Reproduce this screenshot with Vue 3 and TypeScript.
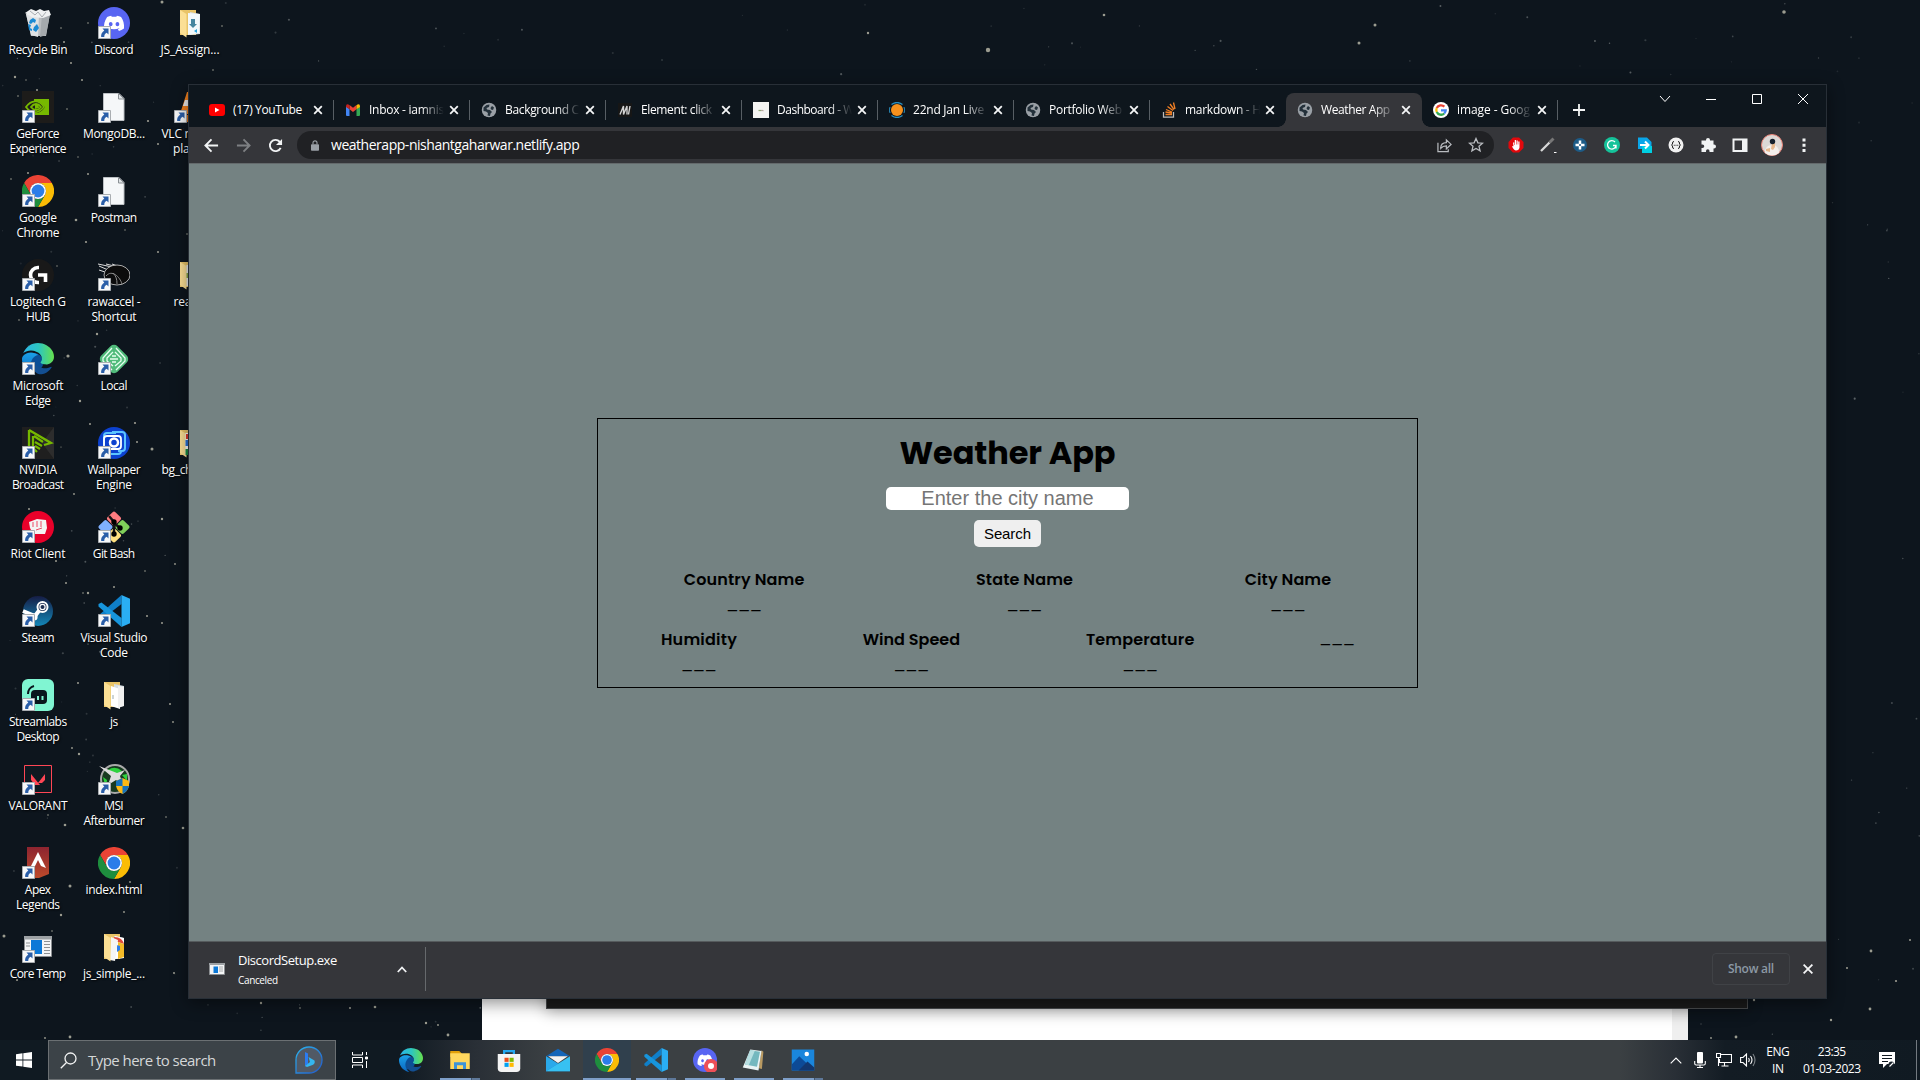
<script setup lang="ts">
import type { Directive } from 'vue'

interface DesktopItem {
  icon: string
  lines: [string, number][]
  col: number
  row: number
  shortcut?: boolean
}
interface Tab {
  title: string
  width: number
  icon: string
  active?: boolean
}
interface Field {
  label?: string
  width: number
}
interface Pin {
  icon: string
  state?: 'open' | 'stacked' | 'active'
}

// Spreads or tightens letters so that a label takes the given width.
const vFit: Directive<HTMLElement, number> = {
  mounted(el, { value }) {
    const count = el.textContent?.length ?? 0
    if (!count) return
    const natural = el.getBoundingClientRect().width
    const gap = (value - natural) / (count - 0.5)
    el.style.letterSpacing = `${gap.toFixed(3)}px`
    el.style.marginRight = `${(-gap).toFixed(3)}px`
  },
}

const discordFace =
  'M20.3 4.4a19.8 19.8 0 0 0-4.9-1.5l-.7 1.3c-1.8-.3-3.7-.3-5.5 0l-.6-1.3a19.7 19.7 0 0 0-4.9 1.5C.5 9-.3 13.6.1 18.1c2.1 1.5 4 2.4 6 3l1.3-2.1-2-.9.5-.4c3.9 1.8 8.2 1.8 12.1 0l.5.4-2 .9 1.3 2c2-.6 4-1.5 6-3 .5-5.1-.8-9.6-3.5-13.6zM8 15.3c-1.2 0-2.2-1.1-2.2-2.4s1-2.4 2.2-2.4 2.2 1.1 2.2 2.4-1 2.4-2.2 2.4zm8 0c-1.2 0-2.2-1.1-2.2-2.4s1-2.4 2.2-2.4 2.2 1.1 2.2 2.4-1 2.4-2.2 2.4z'
const chrome =
  '<g transform="scale(.6667)"><path fill="#ea4335" d="M24 12H44.8A24 24 0 0 0 3.2 12L13.6 30A12 12 0 0 1 24 12z"/><path fill="#fbbc05" d="M24 12H44.8A24 24 0 0 1 24 48L34.4 30A12 12 0 0 0 24 12z"/><path fill="#1e8e3e" d="M13.6 30L3.2 12A24 24 0 0 0 24 48L34.4 30A12 12 0 0 1 13.6 30z"/><circle cx="24" cy="24" r="12" fill="#fff"/><circle cx="24" cy="24" r="9.6" fill="#2b7de9"/></g>'
const folder = (extra: string, front = '') =>
  `<path fill="#e9c468" d="M6 3h16v25H6z"/><path fill="#d5dde1" d="M16 5l10 2v20l-10 1z"/>${extra}<path fill="#fbdf94" d="M6 3l6.500 4v23.500L6 26z"/>${front}`

const icons: Record<string, string> = {
  recycle:
    '<path fill="#b9bdc0" d="M4 7h24l-4 22H9z"/><path fill="#dfe2e4" d="M4 7h13l-1 23-7-2z"/><path fill="#a4a9ad" d="M20 8l8-1-4 21-6 2z"/><path fill="#eef0f1" d="M3 6l6-4 5 2 4-2 4 2 5-1 2 5-8 3-11-1z"/><path d="M8 4l5 4 3-3 4 5 4-5" fill="none" stroke="#a8adb1"/><path fill="#1b8ad3" d="M8 13l3-2 3 2-1 3-2-1-2 2-2-1zM6 17l3 1-1 3 2 1v2l-3-1zM12 20l3-3 2 4-3 4-3-2z"/>',
  discord: `<circle cx="16" cy="16" r="16" fill="#5865f2"/><path transform="translate(6 6.300) scale(.84)" fill="#fff" d="${discordFace}"/>`,
  folderZip: folder('<path fill="#f2f8fb" d="M14 6l12 1-1 19-11 2z"/><path fill="#45859f" d="M17 12h4v5h2l-4 4-4-4h2z"/><path fill="#25a3df" d="M20 24l3-2v4z"/>'),
  folder: folder('<path fill="#fff" d="M13 7l9 3v20l-9-3z"/><path fill="#f0f0f0" d="M20 7l6 1v19l-6 2z"/><path stroke="#9aa" d="M15 16v4"/>'),
  folderChrome: folder('<path fill="#fff" d="M17 5l9 2v20l-9 1z"/><path fill="#df4a3c" d="M16 6c6 0 9 3 10 7l-6-2-4-1z"/><path fill="#f4bb28" d="M20 11l6 2v13l-6 2z"/><path fill="#2b7de9" d="M19 14l3 1v4l-3 2z"/><path fill="#f5f5f5" d="M13 6l7 3-3 21-5-1z"/>'),
  folderApps: folder('', '<path fill="#fff" d="M11.500 6H24v22H11.500z"/><path fill="#df3a30" d="M12 7h9v5h-9z"/><path fill="#2773d8" d="M11.500 13H20v6h-8.500z"/><path fill="#188b43" d="M11.500 22H20v6h-8.500z"/>'),
  folderDoc: folder('', '<path fill="#e9eef3" d="M12.500 6H24v21H12.500z"/><path stroke="#8aa842" stroke-width="2" d="M13.500 14v5"/>'),
  file: '<path fill="#f5f7f9" stroke="#bcc0c4" d="M5.500 2.500H21l5 5v22H5.500z"/><path fill="#dfe3e6" stroke="#8b9095" d="M20.500 2.500v5.500H26z"/>',
  geforce:
    '<path fill="#1d1c1a" d="M0 0h32v32H0z"/><path fill="#76b900" d="M12 8h15v16H12z"/><path fill="#1d1c1a" d="M12 10c6 0 8 3 11 6-3 4-5 6-11 6z"/><path d="M4 16c5-7 13-8 18 0-6 7-13 7-18 0zm5 0c3-4 7-4 10 0-3 4-7 4-10 0z" fill="none" stroke="#76b900" stroke-width="1.800"/><path d="M13 13c3 0 4 2 4 4l-4 1z" fill="#76b900"/>',
  vlc: '<path fill="#f5821f" d="M13 1h6l7 22H6z"/><path fill="#eee" d="M11 9h10l2 6H9z"/><path fill="#e2700f" d="M2 24h28v7H2z"/>',
  chrome: `<g transform="translate(0 0)">${chrome}</g>`,
  logitech:
    '<circle cx="16" cy="16" r="16" fill="#191919"/><path fill="none" stroke="#fff" stroke-width="3.600" d="M17 8.500h-1a7.500 7.500 0 0 0 0 15h1M16 16h7.500v7"/>',
  rawaccel:
    '<path d="M1 7l16 7M0 5l14 3M8 5l12 3M14 5l11 4M1 11l9 3" stroke="#ddd" fill="none"/><ellipse cx="19" cy="16" rx="13" ry="10" fill="#0c0c0c" stroke="#aaa"/><path d="M8 17c6-7 14 1 16 8M15 14c3 3 4 6 4 11" stroke="#8b8b8b" fill="none"/>',
  edge:
    '<defs><linearGradient id="eg1" x1="0" x2="1"><stop offset="0" stop-color="#2bb5e9"/><stop offset=".5" stop-color="#2dc6c0"/><stop offset="1" stop-color="#66e04d"/></linearGradient><linearGradient id="eg2" x1="0" x2="0" y1="0" y2="1"><stop offset="0" stop-color="#1ba1e8"/><stop offset="1" stop-color="#0b66c1"/></linearGradient></defs><g transform="scale(1.333)"><circle cx="9" cy="14.500" r="7" fill="#0b4f97"/><path fill="#134f92" d="M21.860 17.860q.14 0 .25.12.1.13.1.25t-.11.33l-.32.46-.43.53-.44.5-.6.600q-.58.53-1.340 1.040-.76.51-1.600.91-.86.4-1.740.64t-1.670.24q-.9 0-1.690-.28-.8-.28-1.480-.78-.68-.5-1.220-1.170-.53-.66-.92-1.440-.38-.77-.58-1.600-.2-.83-.2-1.670 0-1 .32-1.960.33-.97.87-1.800.14.95.55 1.770.41.82 1.020 1.500.6.68 1.380 1.210.78.54 1.640.9.86.36 1.770.56.92.2 1.800.2 1.120 0 2.180-.24 1.060-.23 2.060-.72z"/><path fill="url(#eg2)" d="M6.360 16.590q0 1.100.27 2.150.27 1.060.78 2.030.51.96 1.240 1.770.74.82 1.660 1.400-1.470-.2-2.800-.74-1.330-.55-2.480-1.370-1.150-.83-2.080-1.900-.92-1.070-1.580-2.330T.36 14.940Q0 13.540 0 12.060q0-.81.32-1.490.31-.68.83-1.230.53-.55 1.200-.96.66-.4 1.350-.66.74-.27 1.500-.39.78-.12 1.550-.12.7 0 1.420.1.72.12 1.400.35.68.23 1.320.57.63.35 1.160.83-.35 0-.7.07-.33.07-.65.23-.63.28-1.200.74-.57.46-1.050 1.040-.48.58-.87 1.260-.38.67-.65 1.390-.27.71-.42 1.440-.15.72-.15 1.380z"/><path fill="url(#eg1)" d="M11.960.06q1.700 0 3.330.39 1.630.38 3.070 1.150 1.430.77 2.620 1.930 1.180 1.160 1.980 2.700.49.94.76 1.960.28 1 .28 2.080 0 .89-.23 1.700-.24.8-.69 1.480-.45.68-1.100 1.220-.64.53-1.450.88-.54.24-1.110.36-.58.13-1.160.13-.42 0-.97-.03-.54-.03-1.100-.12-.55-.1-1.050-.28-.5-.19-.84-.5-.12-.09-.23-.24-.1-.16-.1-.33 0-.15.16-.35.16-.2.35-.5.2-.28.36-.68.16-.4.16-.95 0-1.060-.4-1.960-.4-.91-1.060-1.640-.66-.74-1.520-1.280-.86-.55-1.790-.89-.84-.3-1.720-.44-.87-.14-1.760-.14-1.550 0-3.060.45T.94 7.550q.71-1.740 1.810-3.130 1.100-1.380 2.520-2.350Q6.680 1.100 8.370.58q1.700-.52 3.580-.52Z"/></g>',
  local:
    '<rect x="4.500" y="4.500" width="23" height="23" rx="5" transform="rotate(45 16 16)" fill="#51bb7b"/><g fill="none" stroke="#e6fff0" stroke-width="1.300"><path d="M14 5L5 15v3l9 9M18 5l9 10v3l-9 9M15 9l-6 6v3l6 5M17 9l6 6v3l-6 5M12 16h8M14 13h4M14 19h4"/></g>',
  nvidia:
    '<path fill="#1f1f1f" d="M0 0h32v32H0z"/><path fill="#2d2d2d" d="M32 0v32L20 16z"/><path d="M7 3l22 13-7 2M7 3v23M11 9v12l4 4M12 9l9 6M13 15l7 4M13 19l5 3" stroke="#76b900" stroke-width="2.300" fill="none"/>',
  wallpaper:
    '<circle cx="16" cy="16" r="16" fill="#0c41cf"/><path d="M6 18V9q0-3 3-3h9M14 5h10q3 0 3 3v13q0 3-3 3h-4M10 22H8q-2 0-2-3M13 27h7q3 0 3-3" fill="none" stroke="#5cc4ff" stroke-width="2"/><path d="M6 19V12q0-3 3-3h11q3 0 3 3v7q0 3-3 3H9" fill="none" stroke="#fff" stroke-width="1.800"/><circle cx="16" cy="15.500" r="4" fill="none" stroke="#fff" stroke-width="2.500"/>',
  riot: '<circle cx="16" cy="16" r="16" fill="#e9012a"/><path fill="#f4f4f4" d="M7 11l8-3 9 1 1 8-2 6H11l-3-6z"/><path stroke="#e9012a" stroke-width=".7" fill="none" d="M11 11v5M15 10v6M19 10v6M14 19l6-2"/>',
  gitbash:
    '<g transform="rotate(45 16 16)"><rect x="4.500" y="4.500" width="11" height="11" rx="2" fill="#ff7c80"/><rect x="16.500" y="4.500" width="11" height="11" rx="2" fill="#80d05a"/><rect x="16.500" y="16.500" width="11" height="11" rx="2" fill="#ffe080"/><rect x="4.500" y="16.500" width="11" height="11" rx="2" fill="#7fb0ff"/></g><path d="M11 5l5 6v13M16 12l6 5" stroke="#151515" stroke-width="2.400" fill="none"/><circle cx="16" cy="11" r="2.700"/><circle cx="22" cy="17" r="2.700"/><circle cx="16" cy="23" r="2.700"/>',
  steam:
    '<defs><linearGradient id="st" x1="0" x2="0" y1="0" y2="1"><stop offset="0" stop-color="#161d45"/><stop offset="1" stop-color="#1387b8"/></linearGradient></defs><circle cx="16" cy="16" r="15" fill="url(#st)"/><path d="M1 16l12 5 6-8" stroke="#fff" stroke-width="4" fill="none"/><circle cx="20.500" cy="12" r="5" fill="#1c2c50" stroke="#fff" stroke-width="2"/><circle cx="20.500" cy="12" r="2.600" fill="none" stroke="#fff" stroke-width="1.200"/><circle cx="12" cy="22" r="3.600" fill="#fff"/>',
  vscode:
    '<path fill="#0f7fc9" d="M23.500 0v9L3.500 24.500.5 23v-2.500z"/><path fill="#1795dc" d="M23.500 32v-9L3.500 7.500.5 9v2.500z"/><path fill="#2aaef4" d="M23.500 0L32 3.800v24.400L23.500 32z"/>',
  streamlabs:
    '<rect width="32" height="32" rx="6" fill="#80f5d2"/><rect x="9" y="11" width="16" height="14" rx="4" fill="#09161d"/><path d="M16 17v4M20.500 17v4" stroke="#80f5d2" stroke-width="2"/><path d="M6 15a8 8 0 0 1 6-8" fill="none" stroke="#09161d" stroke-width="2"/>',
  valorant:
    '<path fill="#0f1921" stroke="#ff4655" d="M2.500 2.500h27v27h-27z"/><path fill="#ff4655" d="M9 11l9 11h-5l-4-5zM23 11v6l-3 3h-4z"/>',
  msi: '<circle cx="17" cy="16" r="14" fill="#173a20" stroke="#aaa" stroke-width="2"/><path fill="#2ed23e" d="M10 7q7-5 14 1l-5 3zM5 14l4 3-1 9zM24 12l5-1v7z"/><path fill="#ddd" d="M1 3l18 7 8-3-5 6 3 9-7-5-8 5 3-9z"/><path fill="#fdb813" d="M18 18l6.500-3 6.500 3v5q-1 5-6.500 8-5-2-6.500-8z"/><path fill="#1672ba" d="M18 18l6.500-3v8H31q-1 5-6.500 8v-8H18z"/>',
  apex: '<defs><linearGradient id="ax" x1="0" x2="0" y1="0" y2="1"><stop offset="0" stop-color="#8d2430"/><stop offset="1" stop-color="#bd4a2b"/></linearGradient></defs><path fill="url(#ax)" d="M5 0h22v27l-10 4H5z"/><path fill="#fff" d="M16 5l8 16-5-2-3-6-3 6-5 2z"/>',
  exe: '<path fill="#f4f5f6" stroke="#8b8e91" d="M2.500 5.500h27v20h-27z"/><path fill="#9da1a4" d="M2 5h28v3.500H2z"/><path fill="#0c78d7" d="M9 9h11v14H9z"/><path stroke="#8d9194" d="M4 12h4M4 15h4M22 10.500h6M22 13.500h6M22 16.500h6M22 19.500h6M22 22.500h6"/>',
  exeSmall: '<path fill="#f4f5f6" stroke="#8b8e91" stroke-width="2" d="M1 5h30v22H1z"/><path fill="#9da1a4" d="M0 4h32v4H0z"/><path fill="#0c78d7" d="M9 11h9v13H9z"/><path stroke="#8d9194" stroke-width="1.500" d="M20 12h8M20 16h8M20 20h8"/>',
  youtube: '<rect y="4" width="32" height="24" rx="6" fill="#f00"/><path fill="#fff" d="M12 11v10l9-5z"/>',
  gmail:
    '<path fill="#4285f4" d="M2 9l7 5v14H4q-2 0-2-2z"/><path fill="#34a853" d="M30 9l-7 5v14h5q2 0 2-2z"/><path fill="#ea4335" d="M9 6l7 5.500L23 6v8.500L16 20l-7-5.500z"/><path fill="#c5221f" d="M2 9q0-6 5-4l2 1.500v8L2 10z"/><path fill="#fbbc04" d="M30 9q0-6-5-4l-2 1.500v8l7-4.500z"/>',
  globe:
    '<circle cx="16" cy="16" r="14.500" fill="#9aa0a6"/><path fill="#23303a" d="M5 11l6-5 6-1-1 5-5 2 1 3 6 1 4 4-3 3-1 5-5-1 1-5-4-3-5-1zM22 8l4 3-2 5-4-1-1-3z"/>',
  mdn: '<rect x="2" y="2" width="28" height="28" fill="#161616"/><path stroke="#d2d2d2" stroke-width="2.800" fill="none" d="M6 25L13 8v17L20 8v17M23 25L26 8"/>',
  page: '<rect width="32" height="32" fill="#f4f4f2"/><path stroke="#8faa77" stroke-width="2.500" d="M11 17h5"/><path stroke="#b7a9a0" stroke-width="2.500" d="M16 17h5"/>',
  orange:
    '<circle cx="16" cy="16" r="12" fill="#f7911d"/><path d="M5 5q11-8 22 0M5 27q11 8 22 0" stroke="#2a8fc0" stroke-width="2.500" fill="none"/><path d="M2 10q-3 6 0 12M30 10q3 6 0 12" stroke="#2a8fc0" stroke-width="2" fill="none"/>',
  stack:
    '<path d="M5 20v10h20V20" fill="none" stroke="#bcbbbb" stroke-width="2.500"/><path d="M9 25h13M9 20l13 2M10 15l12 5M13 9l11 8M18 4l8 11M25 1l3 13" stroke="#f48024" stroke-width="2.600"/>',
  google:
    '<circle cx="16" cy="16" r="16" fill="#fff"/><g fill="none" stroke-width="4.500"><path stroke="#ea4335" d="M7.500 12a9.500 9.500 0 0 1 15.300-2.700"/><path stroke="#fbbc05" d="M7.500 12a10 10 0 0 0 0 8"/><path stroke="#34a853" d="M7.500 20a9.500 9.500 0 0 0 15 3"/><path stroke="#4285f4" d="M22.500 23a9 9 0 0 0 3-6.500H16"/></g>',
  explorer:
    '<path fill="#e3a008" d="M3 4h12l3 3v5H3z"/><path fill="#ffd75e" d="M3 7h26v21H3z"/><path fill="#3d93d8" d="M8 19h16v9h-4v-5h-8v5H8z"/>',
  store:
    '<path d="M9.500 9V4h13v5" fill="none" stroke="#24a7ef" stroke-width="3"/><path fill="#f4f4f4" d="M1 8h30v19q0 5-5 5H6q-5 0-5-5z"/><path fill="#e84e1c" d="M10 13h5.500v5.500H10z"/><path fill="#7eb900" d="M16.700 13h5.500v5.500h-5.500z"/><path fill="#00a1f1" d="M10 19.700h5.500v5.500H10z"/><path fill="#ffb901" d="M16.700 19.700h5.500v5.500h-5.500z"/>',
  mail: '<path fill="#1465b8" d="M0 11L16 1l16 10z"/><path fill="#1b93df" d="M0 11v20h32z"/><path fill="#37c1f2" d="M32 11v20H0z"/><path fill="#2aa9ea" d="M0 11l16 10L0 31z"/><path fill="#f3f3f3" d="M3 11h26L16 20z"/>',
  discordRec: `<circle cx="16" cy="16" r="16" fill="#5865f2"/><path transform="translate(6 6.300) scale(.84)" fill="#fff" d="${discordFace}"/><circle cx="24" cy="24" r="9.500" fill="#ed4f57"/><circle cx="24" cy="24" r="4" fill="#fff"/>`,
  notepad:
    '<path fill="#b99a62" d="M26 3l2.500 2-2 23-4-1z"/><path fill="#e9f3f4" d="M11 2l15 2-4 26L1 26z"/><path fill="#74b8bf" d="M11 3l13 2-4 20L4 22z"/><path fill="#b7dfe1" d="M11 3l6 1-8 19-5-1z"/>',
  photos:
    '<path fill="#1a86dc" d="M1 2h30v28H1z"/><path fill="#0d4a96" d="M1 22L11 11l20 19H1z"/><path fill="#12376f" d="M10 30l12-12 9 8v4z"/><circle cx="21" cy="8" r="3" fill="#fff"/>',
  adblock: '<path fill="#e2080c" d="M10 1h12l9 9v12l-9 9H10l-9-9V10z"/><path fill="#fff" d="M10 11h2.500v5h1V6H16v9h1V7h2.500v8h1v-6H23v12q-1 6-7 6-4 0-8-8l2-1 1 1z"/>',
  dropper: '<path stroke="#d8d8d8" stroke-width="4.500" d="M2 28l17-17"/><path stroke="#777" stroke-width="6" d="M19 11l8-8"/><path stroke="#fff" stroke-width="2" d="M28 31h5"/>',
  plusDot: '<circle cx="16" cy="16" r="14" fill="#1d5c87"/><path stroke="#fff" stroke-width="5" d="M16 7v18M7 16h18"/><circle cx="16" cy="16" r="2" fill="#1d5c87"/>',
  grammarly: '<circle cx="16" cy="16" r="16" fill="#15c39a"/><path d="M22 10a8.500 8.500 0 1 0 2 7h-6M24 16v7" fill="none" stroke="#fff" stroke-width="2.600"/>',
  arrow: '<path fill="#0aa6e9" d="M4 1h18l9 9v14H4z"/><path fill="#00cfe2" d="M12 18h20v14H12z"/><path d="M8 16h16M18 9l7 7-7 7" fill="none" stroke="#fff" stroke-width="4"/>',
  braces: '<circle cx="16" cy="16" r="15" fill="#f1f1f1"/><path d="M12 9q-3 0-3 3v2l-2 2 2 2v2q0 3 3 3M20 9q3 0 3 3v2l2 2-2 2v2q0 3-3 3" fill="none" stroke="#222" stroke-width="2"/><path stroke="#222" stroke-width="2" stroke-dasharray="2 1.500" d="M11.500 16.500h9"/>',
  puzzle: '<path fill="#f1f3f4" d="M12 6a4 4 0 0 1 8 0v1h7v8h1a4 4 0 0 1 0 8h-1v7h-8v-2a3.500 3.500 0 0 0-7 0v2H3v-8h2a3.500 3.500 0 0 0 0-7H3V7h9z"/>',
  panel: '<path fill="none" stroke="#f1f3f4" stroke-width="4" d="M3 5h26v23H3z"/><path fill="#f1f3f4" d="M20 5h9v23h-9z"/>',
}

const desktop: DesktopItem[] = [
  { icon: 'recycle', lines: [['Recycle Bin', 59]], col: 1, row: 1 },
  { icon: 'geforce', lines: [['GeForce', 43], ['Experience', 57]], col: 1, row: 2, shortcut: true },
  { icon: 'chrome', lines: [['Google', 38], ['Chrome', 43]], col: 1, row: 3, shortcut: true },
  { icon: 'logitech', lines: [['Logitech G', 56], ['HUB', 24]], col: 1, row: 4, shortcut: true },
  { icon: 'edge', lines: [['Microsoft', 51], ['Edge', 26]], col: 1, row: 5, shortcut: true },
  { icon: 'nvidia', lines: [['NVIDIA', 38], ['Broadcast', 52]], col: 1, row: 6, shortcut: true },
  { icon: 'riot', lines: [['Riot Client', 55]], col: 1, row: 7, shortcut: true },
  { icon: 'steam', lines: [['Steam', 33]], col: 1, row: 8, shortcut: true },
  { icon: 'streamlabs', lines: [['Streamlabs', 58], ['Desktop', 43]], col: 1, row: 9, shortcut: true },
  { icon: 'valorant', lines: [['VALORANT', 59]], col: 1, row: 10, shortcut: true },
  { icon: 'apex', lines: [['Apex', 26], ['Legends', 44]], col: 1, row: 11, shortcut: true },
  { icon: 'exe', lines: [['Core Temp', 56]], col: 1, row: 12, shortcut: true },
  { icon: 'discord', lines: [['Discord', 39]], col: 2, row: 1, shortcut: true },
  { icon: 'file', lines: [['MongoDB...', 62]], col: 2, row: 2, shortcut: true },
  { icon: 'file', lines: [['Postman', 46]], col: 2, row: 3, shortcut: true },
  { icon: 'rawaccel', lines: [['rawaccel -', 53], ['Shortcut', 45]], col: 2, row: 4, shortcut: true },
  { icon: 'local', lines: [['Local', 27]], col: 2, row: 5, shortcut: true },
  { icon: 'wallpaper', lines: [['Wallpaper', 53], ['Engine', 36]], col: 2, row: 6, shortcut: true },
  { icon: 'gitbash', lines: [['Git Bash', 42]], col: 2, row: 7, shortcut: true },
  { icon: 'vscode', lines: [['Visual Studio', 67], ['Code', 28]], col: 2, row: 8, shortcut: true },
  { icon: 'folder', lines: [['js', 8]], col: 2, row: 9 },
  { icon: 'msi', lines: [['MSI', 19], ['Afterburner', 61]], col: 2, row: 10, shortcut: true },
  { icon: 'chrome', lines: [['index.html', 57]], col: 2, row: 11 },
  { icon: 'folderChrome', lines: [['js_simple_...', 62]], col: 2, row: 12 },
  { icon: 'folderZip', lines: [['JS_Assign...', 59]], col: 3, row: 1 },
  { icon: 'vlc', lines: [['VLC media', 57], ['player', 34]], col: 3, row: 2, shortcut: true },
  { icon: 'folderDoc', lines: [['reacts', 33]], col: 3, row: 4 },
  { icon: 'folderApps', lines: [['bg_change', 57]], col: 3, row: 6 },
]

const tabs: Tab[] = [
  { title: '(17) YouTube', width: 69, icon: 'youtube' },
  { title: 'Inbox - iamnis', width: 75, icon: 'gmail' },
  { title: 'Background C', width: 74, icon: 'globe' },
  { title: 'Element: click', width: 71, icon: 'mdn' },
  { title: 'Dashboard - W', width: 77, icon: 'page' },
  { title: '22nd Jan Live', width: 71, icon: 'orange' },
  { title: 'Portfolio Web', width: 73, icon: 'globe' },
  { title: 'markdown - H', width: 76, icon: 'stack' },
  { title: 'Weather App', width: 69, icon: 'globe', active: true },
  { title: 'image - Goog', width: 73, icon: 'google' },
]

const extensions = ['adblock', 'dropper', 'plusDot', 'grammarly', 'arrow', 'braces', 'puzzle', 'panel']

const places: Field[] = [
  { label: 'Country Name', width: 120.5 },
  { label: 'State Name', width: 97 },
  { label: 'City Name', width: 86.5 },
]
const readings: Field[] = [
  { label: 'Humidity', width: 76 },
  { label: 'Wind Speed', width: 97.5 },
  { label: 'Temperature', width: 108.5 },
  { width: 34 },
]

const pins: Pin[] = [
  { icon: 'edge' },
  { icon: 'explorer', state: 'stacked' },
  { icon: 'store' },
  { icon: 'mail' },
  { icon: 'chrome', state: 'active' },
  { icon: 'vscode', state: 'stacked' },
  { icon: 'discordRec', state: 'open' },
  { icon: 'notepad', state: 'open' },
  { icon: 'photos', state: 'stacked' },
]

// Night sky: hand-placed bright stars, then a seeded scatter of faint ones.
const bright: [number, number, number][] = [
  [162, 2, 1.5], [88, 23, 0.8], [61, 28, 0.8], [64, 42, 1], [71, 63, 1], [15, 77, 1.2], [26, 80, 0.7], [82, 80, 1],
  [37, 90, 1], [18, 96, 0.8], [67, 109, 0.8], [148, 121, 1.1], [158, 144, 1], [78, 157, 0.7], [28, 173, 1],
  [88, 174, 1], [11, 179, 0.8], [76, 220, 1.3], [86, 242, 1.1], [125, 230, 0.7], [187, 234, 0.8], [158, 252, 1],
  [57, 266, 0.7], [133, 306, 1], [19, 320, 0.8], [97, 334, 1.2], [68, 356, 1.6], [80, 401, 1.2], [90, 424, 1],
  [135, 423, 1.1], [137, 442, 1], [152, 449, 1.5], [61, 447, 0.6], [74, 494, 0.9], [29, 509, 1], [162, 519, 1.2],
  [56, 561, 1], [66, 583, 1], [145, 571, 0.8], [114, 587, 1], [88, 593, 1.2], [83, 593, 0.8], [175, 564, 0.9],
  [147, 616, 1], [162, 623, 1], [88, 644, 0.6], [78, 683, 1], [170, 704, 1], [173, 722, 0.9], [79, 754, 1.2],
  [72, 748, 0.9], [65, 825, 1.3], [48, 815, 0.8], [166, 817, 0.8], [183, 828, 1.3], [70, 886, 1.5], [61, 915, 1.2],
  [4, 936, 1.5], [124, 912, 0.9], [52, 931, 0.8], [130, 882, 0.9], [17, 980, 1.1], [174, 973, 1], [213, 70, 0.8],
  [222, 26, 0.8], [988, 50, 2.2], [1784, 12, 1.8], [1359, 43, 1.5], [1375, 25, 1.5], [1104, 15, 1.3], [868, 33, 1.2],
  [261, 1003, 1.2], [300, 1008, 0.8], [350, 1008, 1], [375, 1007, 1.3], [426, 1023, 1.2], [438, 1025, 0.9],
  [448, 1035, 1.4], [45, 1038, 0.9], [70, 1037, 1.4], [1871, 951, 1.4], [1847, 968, 1], [1896, 981, 1.1],
  [1870, 1009, 1.4], [1831, 1020, 1.2], [1754, 1000, 1.2], [1736, 1037, 1.4], [1711, 1038, 0.9], [1910, 940, 1],
]
let seed = 20230301
const random = () => {
  seed = (seed * 1103515245 + 12345) % 2147483648
  return seed / 2147483648
}
const faint = Array.from({ length: 620 }, () => ({
  x: random() * 1920,
  y: random() * 1040,
  r: 0.5 + random() * 0.6,
  o: 0.1 + random() * 0.45,
}))
</script>

<template>
  <main class="screen">
    <svg class="sky" viewBox="0 0 1920 1080">
      <circle v-for="(s, i) in faint" :key="`f${i}`" :cx="s.x" :cy="s.y" :r="s.r" fill="#9aa0a0" :opacity="s.o" />
      <circle v-for="(s, i) in bright" :key="`b${i}`" :cx="s[0]" :cy="s[1]" :r="s[2]" fill="#b5b4a4" opacity=".85" />
    </svg>

    <section class="desktop">
      <div v-for="(d, i) in desktop" :key="i" class="item" :style="{ gridColumn: d.col, gridRow: d.row }">
        <div class="glyph">
          <svg viewBox="0 0 32 32" v-html="icons[d.icon]" />
          <svg v-if="d.shortcut" class="link" viewBox="0 0 13 13">
            <path fill="#f7f8f9" stroke="#a9adb1" d="M.5.5h12v12H.5z" />
            <path fill="#2a5ea8" d="M4.500 2.500h6v6L8.700 6.700Q6 8 6.300 11H3.200Q2.500 7 6.300 4.400z" />
          </svg>
        </div>
        <div v-for="l in d.lines" :key="l[0]" class="label"><span v-fit="l[1]">{{ l[0] }}</span></div>
      </div>
    </section>

    <section class="doc"><div class="doc-scroll" /></section>
    <section class="editor" />

    <section class="browser">
      <header class="tabbar">
        <div class="tabs">
          <div v-for="t in tabs" :key="t.title" class="tab" :class="{ active: t.active }">
            <svg class="favicon" viewBox="0 0 32 32" v-html="icons[t.icon]" />
            <div class="title" :class="{ fade: t.title !== '(17) YouTube' }"><span v-fit="t.width">{{ t.title }}</span></div>
            <svg class="x" viewBox="0 0 10 10"><path d="M1.200 1.200l7.600 7.600M8.800 1.200L1.200 8.800" /></svg>
          </div>
          <svg class="plus" viewBox="0 0 12 12"><path d="M6 0v12M0 6h12" /></svg>
        </div>
        <div class="controls">
          <svg viewBox="0 0 12 12"><path d="M1 3l5 5.500L11 3" /></svg>
          <svg viewBox="0 0 12 12"><path d="M1 6.500h10" /></svg>
          <svg viewBox="0 0 12 12"><path d="M1.500 1.500h9v9h-9z" /></svg>
          <svg viewBox="0 0 12 12"><path d="M1 1l10 10M11 1L1 11" /></svg>
        </div>
      </header>

      <div class="toolbar">
        <svg class="nav" viewBox="0 0 16 16"><path d="M15 8H2M8 1.500L1.500 8 8 14.500" /></svg>
        <svg class="nav dim" viewBox="0 0 16 16"><path d="M1 8h13M8 1.500L14.500 8 8 14.500" /></svg>
        <svg class="nav" viewBox="0 0 16 16"><path d="M13.500 10.500a6 6 0 1 1-1-6.500l1.500 2" /><path class="solid" d="M15 1v6.500H8.500z" /></svg>
        <div class="omnibox">
          <svg class="lock" viewBox="0 0 10 13"><path d="M1 5h8q1 0 1 1v6q0 1-1 1H1q-1 0-1-1V6q0-1 1-1z" /><path class="shackle" d="M2.500 5V3.200a2.500 2.500 0 0 1 5 0V5" /></svg>
          <div class="url"><span v-fit="248.5">weatherapp-nishantgaharwar.netlify.app</span></div>
          <svg class="line" viewBox="0 0 16 16"><path d="M1 5v9.500h11V12M4 11q0-6 6-6V2l5 4.800-5 4.700V8.500Q6 8.500 4 11z" /></svg>
          <svg class="line star" viewBox="0 0 16 16"><path d="M8 1.500l1.900 4.300 4.700.4-3.600 3.100 1.100 4.600L8 11.500l-4.100 2.400L5 9.300 1.400 6.200l4.700-.4z" /></svg>
        </div>
        <div class="exts">
          <span v-for="e in extensions" :key="e" class="ext"><svg viewBox="0 0 32 32" v-html="icons[e]" /></span>
          <span class="ext">
            <svg class="avatar" viewBox="0 0 22 22">
              <circle cx="11" cy="11" r="10.500" fill="#dcd8d6" stroke="#e98478" />
              <path fill="#f3efec" d="M4 19q0-8 7-8t7 8q-7 5-14 0z" /><path fill="#e7b98f" d="M11 9h3v4l-2 3-2-1zM5 15l4-1v4l-4-1z" /><circle cx="11.500" cy="7.500" r="2.700" fill="#14202e" />
            </svg>
          </span>
          <span class="ext"><svg viewBox="0 0 16 16"><path fill="#f1f3f4" d="M6.500 1.500h3v3h-3zM6.500 6.700h3v3h-3zM6.500 11.900h3v3h-3z" /></svg></span>
        </div>
      </div>

      <div class="page">
        <div class="card">
          <h1><span v-fit="216">Weather App</span></h1>
          <input type="text" placeholder="Enter the city name" />
          <button type="button"><span v-fit="47">Search</span></button>
          <div class="row first">
            <div v-for="f in places" :key="f.label" class="field" :style="{ width: `${f.width}px` }">
              <strong><span v-fit="f.width">{{ f.label }}</span></strong>
              <p>___</p>
            </div>
          </div>
          <div class="row">
            <div v-for="(f, i) in readings" :key="i" class="field" :style="{ width: `${f.width}px` }">
              <strong v-if="f.label"><span v-fit="f.width">{{ f.label }}</span></strong>
              <p :class="{ lone: !f.label }">___</p>
            </div>
          </div>
        </div>
      </div>

      <footer class="downloads">
        <svg class="file" viewBox="0 0 32 32" v-html="icons.exeSmall" />
        <div class="info">
          <div class="name"><span v-fit="99">DiscordSetup.exe</span></div>
          <div class="state"><span v-fit="40">Canceled</span></div>
        </div>
        <svg class="caret" viewBox="0 0 10 7"><path d="M.8 6L5 1.500 9.200 6" /></svg>
        <div class="rule" />
        <div class="show"><span v-fit="46">Show all</span></div>
        <svg class="x" viewBox="0 0 10 10"><path d="M.6.6l8.800 8.800M9.400.6L.6 9.400" /></svg>
      </footer>
    </section>

    <nav class="taskbar">
      <div class="start">
        <svg viewBox="0 0 16 16"><path fill="#fff" d="M0 2.200l6.500-.9v6.200H0zM7.300 1.200L16 0v7.500H7.300zM0 8.400h6.500v6.200L0 13.700zM7.300 8.400H16V16l-8.700-1.200z" /></svg>
      </div>
      <div class="search">
        <svg class="lens" viewBox="0 0 17 17"><circle cx="10.500" cy="6.500" r="5.500" /><path d="M6.500 10.500L.8 16.200" /></svg>
        <div class="hint"><span v-fit="128">Type here to search</span></div>
        <svg class="bing" viewBox="0 0 28 28">
          <defs><linearGradient id="bg" x1="0" x2="1" y1="0" y2="1"><stop offset="0" stop-color="#2bb4ee" /><stop offset="1" stop-color="#2359c9" /></linearGradient></defs>
          <path fill="#515965" stroke="url(#bg)" stroke-width="1.300" d="M1 27V14A13 13 0 1 1 14 27z" />
          <path fill="#2b7cf2" d="M10 6l3 1.500v10l-3 3z" /><path fill="#35b6f0" d="M13.500 11l6 3.500q1 3-2 4.500l-5.500 2-2-1 5-4z" />
        </svg>
      </div>
      <div class="task">
        <svg viewBox="0 0 16 16"><path d="M.5 0v3h10V0M.5 5.500h10v5H.5zM.5 16v-3h10v3M14.500 0v3M14.500 9v7" /><path fill="#fff" d="M13.500 5h2v2h-2z" /></svg>
      </div>
      <div class="pins">
        <div v-for="p in pins" :key="p.icon" class="pin" :class="p.state">
          <svg viewBox="0 0 32 32" v-html="icons[p.icon]" />
          <i v-if="p.state" class="bar" />
        </div>
      </div>
      <div class="tray">
        <svg class="t-up" viewBox="0 0 12 7"><path d="M.7 6.300L6 1l5.300 5.300" /></svg>
        <svg class="t-mic" viewBox="0 0 12 16"><rect x="3" y="0" width="6" height="11.500" rx="1" fill="#fff" stroke="none" /><path d="M.7 9v2.500q0 1.500 1.500 1.500h7.600q1.500 0 1.500-1.500V9M6 13v2.500M3 15.500h6" /></svg>
        <svg class="t-net" viewBox="0 0 16 14"><path d="M5 1.500h10.500v8H3.500V6M8.500 9.500V13M5.500 13h7M.5 .5h4v4h-4zM2.500 4.500V13" /></svg>
        <svg class="t-vol" viewBox="0 0 16 14"><path d="M.6 4.500H3L6.500 1v12L3 9.500H.6zM8.500 5q1.500 2 0 4M10.500 3q3 4 0 8" /><path opacity=".45" d="M13 1q4 6 0 12" /></svg>
        <div class="lang"><span v-fit="23">ENG</span><span v-fit="12">IN</span></div>
        <div class="clock"><span v-fit="28">23:35</span><span v-fit="58">01-03-2023</span></div>
        <svg class="t-note" viewBox="0 0 16 16"><path fill="#fff" stroke="none" d="M0 0h16v12h-8l-4 4v-4H0z" /><path stroke="#101921" d="M3 3.500h10M3 6.500h10M3 9.500h6" /><circle cx="12.500" cy="12.500" r="3" fill="#18212a" /><path d="M10.500 14.500l4-4" /></svg>
        <div class="peek" />
      </div>
    </nav>
  </main>
</template>

<style>
body {
  margin: 0;
  overflow: hidden;
  background: #0d151d;
}
</style>

<style scoped>
.screen {
  position: relative;
  width: 1920px;
  height: 1080px;
  overflow: hidden;
  background: #0d151d;
  color: #fff;
  font-family: 'Segoe UI', 'Open Sans', 'Noto Sans', sans-serif;
  font-size: 12px;
}
svg {
  display: block;
  flex: none;
}
span {
  white-space: nowrap;
}
.sky {
  position: absolute;
  inset: 0;
}

/* Desktop icons */
.desktop {
  position: absolute;
  left: 0;
  top: 0;
  display: grid;
  grid-template-columns: repeat(3, 76px);
  grid-template-rows: repeat(12, 84px);
}
.item {
  display: flex;
  flex-direction: column;
  align-items: center;
  padding-top: 7px;
}
.glyph {
  position: relative;
  width: 32px;
  height: 32px;
  margin-bottom: 3px;
}
.glyph > svg:first-child {
  width: 32px;
  height: 32px;
}
.glyph .link {
  position: absolute;
  left: 0;
  bottom: 0;
  width: 13px;
  height: 13px;
}
.label {
  height: 15px;
  line-height: 15px;
  font-size: 12px;
  text-shadow: 1px 1px 2px #000;
}

/* Windows behind the browser */
.doc {
  position: absolute;
  left: 482px;
  top: 900px;
  width: 1206px;
  height: 140px;
  background: #fff;
  display: flex;
  justify-content: flex-end;
}
.doc-scroll {
  width: 16px;
  background: #efefef;
}
.editor {
  position: absolute;
  left: 546px;
  top: 900px;
  width: 1202px;
  height: 109px;
  box-sizing: border-box;
  border: 1px solid #47494b;
  background: #1a1a1a;
  box-shadow: 0 3px 14px rgba(0, 0, 0, 0.3);
}

/* Browser */
.browser {
  position: absolute;
  left: 188px;
  top: 84px;
  width: 1639px;
  height: 915px;
  box-sizing: border-box;
  border: 1px solid #282f37;
  background: #35363a;
  box-shadow: 0 4px 16px rgba(0, 0, 0, 0.45);
  display: flex;
  flex-direction: column;
}
.tabbar {
  height: 42px;
  background: #0e161d;
  display: flex;
  justify-content: space-between;
}
.tabs {
  display: flex;
  align-items: flex-end;
  padding-left: 9px;
}
.tab {
  position: relative;
  width: 136px;
  height: 34px;
  box-sizing: border-box;
  padding-left: 11px;
  display: flex;
  align-items: center;
}
.tab::after {
  content: '';
  position: absolute;
  right: 0;
  top: 7px;
  width: 1px;
  height: 20px;
  background: #575e64;
}
.tab.active::after,
.tab:nth-child(8)::after {
  display: none;
}
.tab.active {
  background: #35363a;
  border-radius: 8px 8px 0 0;
}
.tab.active::before {
  content: '';
  position: absolute;
  left: -8px;
  right: -8px;
  bottom: 0;
  height: 8px;
  background:
    radial-gradient(circle at 0 0, transparent 7.5px, #35363a 8px) left / 8px 8px no-repeat,
    radial-gradient(circle at 100% 0, transparent 7.5px, #35363a 8px) right / 8px 8px no-repeat;
}
.favicon {
  width: 16px;
  height: 16px;
}
.title {
  width: 79px;
  margin-left: 8px;
  overflow: hidden;
  line-height: 20px;
  font-size: 12px;
}
.title.fade {
  mask-image: linear-gradient(90deg, #000 52px, transparent 75px);
}
.tab .x {
  width: 10px;
  height: 10px;
  margin-left: 1px;
}
.x path,
.plus path {
  stroke: #f4f5f6;
  stroke-width: 1.8;
}
.plus {
  width: 12px;
  height: 12px;
  margin: 0 0 11px 15px;
}
.controls {
  display: flex;
  gap: 34px;
  padding: 8px 17px 0 0;
}
.controls svg {
  width: 12px;
  height: 12px;
}
.controls path {
  fill: none;
  stroke: #fff;
  stroke-width: 1;
}
.toolbar {
  height: 36px;
  border-bottom: 1px solid #646a6c;
  display: flex;
  align-items: center;
  padding-left: 15px;
}
.nav {
  width: 15px;
  height: 15px;
  margin-right: 17px;
}
.nav path {
  fill: none;
  stroke: #f1f3f4;
  stroke-width: 2;
}
.nav .solid {
  fill: #f1f3f4;
  stroke: none;
}
.nav.dim path {
  stroke: #7e8083;
}
.omnibox {
  width: 1197px;
  height: 28px;
  margin-left: -3px;
  border-radius: 14px;
  background: #202124;
  display: flex;
  align-items: center;
}
.lock {
  width: 8px;
  height: 11px;
  margin-left: 14px;
}
.lock path {
  fill: #9aa0a6;
}
.lock .shackle {
  fill: none;
  stroke: #9aa0a6;
  stroke-width: 1.4;
}
.url {
  flex: 1;
  margin-left: 12px;
  font-size: 14px;
  line-height: 20px;
}
.line {
  width: 15px;
  height: 15px;
}
.line path {
  fill: none;
  stroke: #b9bcc0;
  stroke-width: 1.3;
}
.line.star {
  width: 16px;
  height: 16px;
  margin: 0 10px 0 16px;
}
.exts {
  display: flex;
  margin-left: 6px;
}
.ext {
  width: 32px;
  height: 24px;
  display: flex;
  align-items: center;
  justify-content: center;
}
.ext svg {
  width: 16px;
  height: 16px;
  overflow: visible;
}
.ext .avatar {
  width: 22px;
  height: 22px;
}

.page {
  height: 777px;
  background: #748282;
  display: flex;
  align-items: flex-start;
  justify-content: center;
  color: #000;
  font-family: Poppins, Inter, 'Open Sans', sans-serif;
}
.card {
  width: 821px;
  height: 270px;
  margin-top: 254px;
  box-sizing: border-box;
  border: 1px solid #000;
  display: flex;
  flex-direction: column;
  align-items: center;
}
h1 {
  margin: 10px 0 0;
  height: 48px;
  line-height: 48px;
  font-size: 32px;
  font-weight: 700;
}
input {
  width: 243px;
  height: 23px;
  margin-top: 10px;
  box-sizing: border-box;
  padding: 0;
  border: 0;
  border-radius: 5px;
  background: #fff;
  text-align: center;
  font: 20px 'Liberation Sans', Arial, sans-serif;
}
input::placeholder {
  color: #757575;
}
button {
  width: 67px;
  height: 27px;
  margin-top: 10px;
  padding: 0;
  border: 0;
  border-radius: 5px;
  background: #efefef;
  color: #000;
  font: 15px 'Liberation Sans', Arial, sans-serif;
}
.row {
  width: 819px;
  height: 60px;
  display: flex;
  justify-content: space-around;
}
.row.first {
  margin-top: 20px;
}
.field {
  display: flex;
  flex-direction: column;
  align-items: center;
}
.field strong {
  height: 25px;
  line-height: 25px;
  font-size: 16px;
  font-weight: 600;
}
.field p {
  margin: -1px -3px 0 0;
  height: 23px;
  font: 16px/23px 'Liberation Sans', Arial, sans-serif;
  letter-spacing: 2.85px;
}
.field p.lone {
  margin-top: -2px;
}

.downloads {
  flex: 1;
  border-top: 1px solid #565b5d;
  display: flex;
  align-items: center;
  padding-bottom: 2px;
}
.downloads .file {
  width: 16px;
  height: 16px;
  margin-left: 20px;
}
.info {
  width: 159px;
  margin-left: 13px;
  padding-top: 2px;
}
.name {
  font-size: 13px;
  line-height: 20px;
}
.state {
  font-size: 10px;
  line-height: 20px;
}
.caret {
  width: 10px;
  height: 7px;
}
.caret path {
  fill: none;
  stroke: #f1f3f4;
  stroke-width: 1.8;
}
.rule {
  width: 1px;
  height: 44px;
  margin-left: 18px;
  background: #66696c;
}
.show {
  width: 78px;
  height: 32px;
  box-sizing: border-box;
  margin-left: auto;
  border: 1px solid #404246;
  border-radius: 4px;
  text-align: center;
  line-height: 29px;
  font-size: 12px;
  font-weight: 600;
  color: #8c99a5;
}
.downloads .x {
  width: 10px;
  height: 10px;
  margin: 0 13px;
}

/* Taskbar */
.taskbar {
  position: absolute;
  left: 0;
  right: 0;
  bottom: 0;
  height: 40px;
  display: flex;
  background: linear-gradient(90deg, #101a22 0, #101a22 400px, #292f36 475px, #3b4043 550px, #3b4043 1620px, #292f36 1675px, #131c24 1725px, #101a22 100%);
}
.start {
  width: 48px;
  display: flex;
  align-items: center;
  justify-content: center;
}
.start svg,
.task svg {
  width: 16px;
  height: 16px;
}
.search {
  width: 288px;
  box-sizing: border-box;
  border: 1px solid #6b7073;
  background: #3c4348;
  display: flex;
  align-items: center;
}
.lens {
  width: 17px;
  height: 17px;
  margin-left: 11px;
}
.lens circle,
.lens path {
  fill: none;
  stroke: #f2f3f3;
  stroke-width: 1.3;
}
.hint {
  flex: 1;
  margin-left: 11px;
  font-size: 15px;
  color: #d5d7d8;
}
.bing {
  width: 28px;
  height: 28px;
  margin-right: 12px;
}
.task {
  width: 51px;
  display: flex;
  align-items: center;
  padding-left: 16px;
  box-sizing: border-box;
}
.task path {
  fill: none;
  stroke: #fff;
  stroke-width: 1;
}
.task path + path {
  fill: #fff;
}
.pins {
  display: flex;
  gap: 1px;
}
.pin {
  position: relative;
  width: 48px;
  display: flex;
  align-items: center;
  justify-content: center;
}
.pin svg {
  width: 24px;
  height: 24px;
}
.pin.active {
  background: #30404d;
}
.bar {
  position: absolute;
  left: 4px;
  right: 4px;
  bottom: 0;
  height: 2px;
  background: #7e9fc9;
}
.stacked .bar {
  background: linear-gradient(90deg, #7e9fc9 31px, #40556d 31px, #40556d 32px, #5e7899 32px);
}
.active .bar {
  left: 0;
  right: 0;
}
.tray {
  margin-left: auto;
  display: flex;
  align-items: center;
}
.tray path {
  fill: none;
  stroke: #fff;
  stroke-width: 1.1;
}
.t-up {
  width: 12px;
  height: 7px;
  margin-right: 12px;
}
.t-mic {
  width: 12px;
  height: 16px;
  margin-right: 10px;
}
.t-net {
  width: 16px;
  height: 14px;
  margin-right: 8px;
}
.t-vol {
  width: 16px;
  height: 14px;
  margin-right: 10px;
}
.lang,
.clock {
  display: flex;
  flex-direction: column;
  align-items: center;
  line-height: 17px;
  font-size: 12px;
}
.lang {
  width: 24px;
}
.clock {
  width: 60px;
  margin-left: 12px;
  padding-bottom: 1px;
}
.t-note {
  width: 16px;
  height: 16px;
  margin-left: 17px;
}
.tray .t-note path:first-child {
  fill: #fff;
  stroke: none;
}
.tray .t-note path:nth-child(2) {
  stroke: #101921;
}
.peek {
  width: 3px;
  height: 40px;
  margin-left: 21px;
  border-left: 1px solid #737a80;
}
</style>
